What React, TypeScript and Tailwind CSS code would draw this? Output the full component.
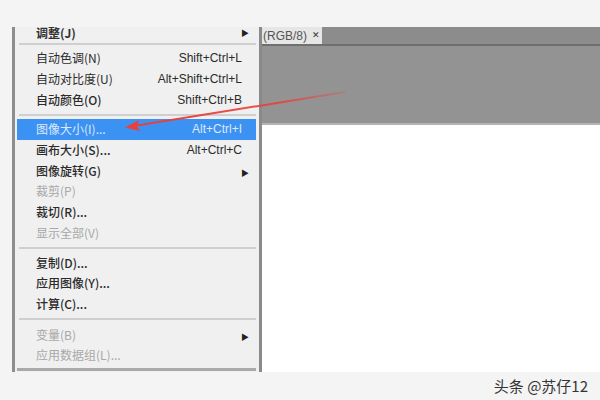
type Item = {
  label?: string;
  shortcut?: string;
  sub?: boolean;
  disabled?: boolean;
  active?: boolean;
  bold?: boolean;
  sep?: boolean;
};

const items: Item[] = [
  { sep: true },
  { label: "自动色调(N)", shortcut: "Shift+Ctrl+L" },
  { label: "自动对比度(U)", shortcut: "Alt+Shift+Ctrl+L" },
  { label: "自动颜色(O)", shortcut: "Shift+Ctrl+B", bold: true },
  { sep: true },
  { label: "图像大小(I)...", shortcut: "Alt+Ctrl+I", active: true },
  { label: "画布大小(S)...", shortcut: "Alt+Ctrl+C", bold: true },
  { label: "图像旋转(G)", sub: true, bold: true },
  { label: "裁剪(P)", disabled: true },
  { label: "裁切(R)...", bold: true },
  { label: "显示全部(V)", disabled: true },
  { sep: true },
  { label: "复制(D)...", bold: true },
  { label: "应用图像(Y)...", bold: true },
  { label: "计算(C)...", bold: true },
  { sep: true },
  { label: "变量(B)", sub: true, disabled: true },
  { label: "应用数据组(L)...", disabled: true },
];

const Arrow = () => <span className="text-[8px] leading-none text-[#222]">▶</span>;

const App = () => {
  return (
    <div
      className="w-[600px] h-[400px] bg-[#f4f4f4] flex flex-col overflow-hidden relative"
      style={{ fontFamily: '"Noto Sans CJK SC", "Liberation Sans", sans-serif' }}
    >
      <div className="h-[27px] flex-none" />

      <div className="flex h-[345px] flex-none">
        <div className="w-[12px] flex-none" />

        {/* menu */}
        <div className="w-[250px] flex-none flex border-l-[3px] border-[#8d8d8d] bg-[#f0f0f0] overflow-hidden">
          <div className="flex-1 flex flex-col pl-[2px] pr-[3px] text-[12px] text-[#2b2b2b]">
            <div className="h-[12px] flex-none flex items-center justify-between pl-[19px] pr-[7px] overflow-visible">
              <span className="leading-[14px] font-bold text-[#333] -mt-[1px]">调整(J)</span>
              <Arrow />
            </div>
            {items.map((item, i) =>
              item.sep ? (
                <div
                  key={i}
                  className={`${i === 15 ? "h-[10px]" : "h-[9px]"} flex-none flex items-center pl-[2px]`}
                >
                  <div className="w-full h-[2px] bg-[#cfcfcf]" />
                </div>
              ) : (
                <div
                  key={i}
                  className={`h-[20.7px] flex-none flex items-center justify-between pl-[19px] pr-[14px] ${
                    item.active ? "bg-[#3c92f3] text-[#dce9fb]" : ""
                  } ${item.disabled ? "text-[#a8a8a8]" : ""}`}
                >
                  <span className={item.bold && !item.disabled ? "font-medium" : ""}>{item.label}</span>
                  {item.shortcut ? (
                    <span className="font-medium" style={{ fontFamily: '"Liberation Sans", sans-serif' }}>
                      {item.shortcut}
                    </span>
                  ) : item.sub ? (
                    <span className="-mr-[7px]">
                      <Arrow />
                    </span>
                  ) : null}
                </div>
              )
            )}
            <div className="flex-1" />
            <div className="h-[3px] flex-none bg-[#a9a9a9] mb-[1px]" />
          </div>
          <div className="w-[3px] bg-[#8a8a8a]" />
        </div>

        {/* document area */}
        <div className="flex-1 flex flex-col bg-white">
          <div className="h-[17px] flex bg-[#8c8c8c] flex-none">
            <div
              className="w-[60px] bg-[#e6e6e6] flex items-center pl-[1px] text-[12px] text-[#555] gap-[5px]"
              style={{ fontFamily: '"Liberation Sans", sans-serif' }}
            >
              <span>(RGB/8)</span>
              <span className="text-[9px] text-[#333]">✕</span>
            </div>
          </div>
          <div className="h-[2px] bg-[#6f6f6f] flex-none" />
          <div className="h-[77px] bg-[#939393] flex-none" />
          <div className="h-[2px] bg-[#b4b4b4] flex-none" />
          <div className="flex-1 bg-white" />
        </div>
      </div>

      <div className="flex-1 flex items-center justify-end pr-[12px] text-[15px] text-[#333]">
        头条 @苏仔12
      </div>

      {/* red annotation arrow */}
      <svg className="absolute left-0 top-0" width="600" height="400">
        <defs>
          <linearGradient id="fade" x1="345" y1="92" x2="128" y2="127" gradientUnits="userSpaceOnUse">
            <stop offset="0" stopColor="#e8413b" stopOpacity="0.2" />
            <stop offset="0.3" stopColor="#e8413b" stopOpacity="0.9" />
            <stop offset="1" stopColor="#e8413b" />
          </linearGradient>
        </defs>
        <line x1="345" y1="92" x2="134" y2="126" stroke="url(#fade)" strokeWidth="2" />
        <polygon points="125,127.5 139,120 137,126 140,131" fill="#e8413b" />
      </svg>
    </div>
  );
};

export default App;
